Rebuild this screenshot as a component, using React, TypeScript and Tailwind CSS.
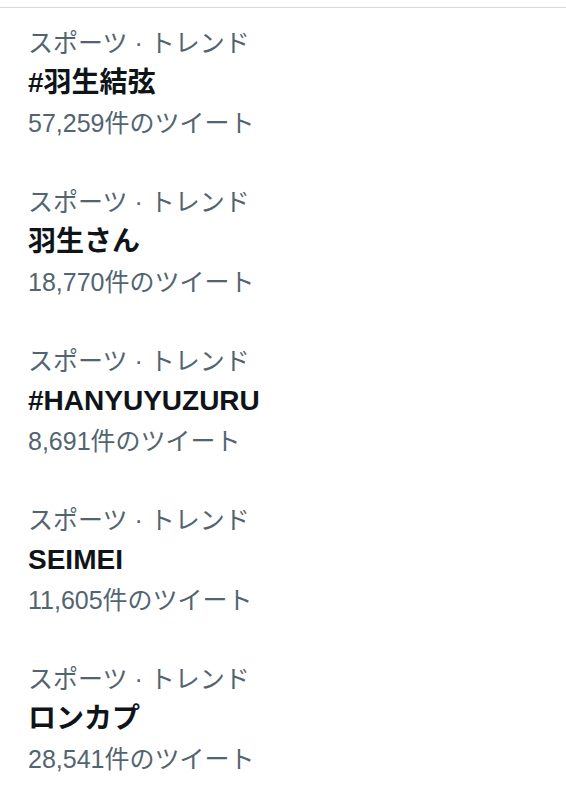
const trends = [
  { title: "#羽生結弦", count: "57,259件のツイート" },
  { title: "羽生さん", count: "18,770件のツイート" },
  { title: "#HANYUYUZURU", count: "8,691件のツイート" },
  { title: "SEIMEI", count: "11,605件のツイート" },
  { title: "ロンカプ", count: "28,541件のツイート" },
];

export default function App() {
  return (
    <div
      className="min-h-[807px] bg-white pt-[7px]"
      style={{ fontFamily: "'Liberation Sans', 'Noto Sans CJK JP', sans-serif" }}
    >
      <div className="border-t border-[#d5dcdb]">
        {trends.map((t) => (
          <div key={t.title} className="px-[28px] pt-[15px] pb-[24px]">
            <div className="text-[25px] leading-[40px] text-[#536471]">スポーツ · トレンド</div>
            <div className="text-[28px] leading-[40px] font-bold text-[#0f1419]">{t.title}</div>
            <div className="text-[25px] leading-[40px] text-[#536471]">{t.count}</div>
          </div>
        ))}
      </div>
    </div>
  );
}
